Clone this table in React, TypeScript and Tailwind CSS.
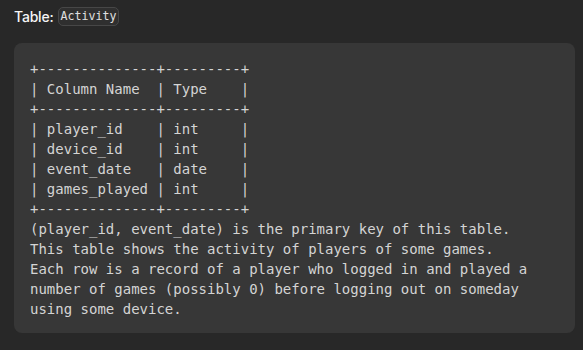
import React from "react";

const table = `+--------------+---------+
| Column Name  | Type    |
+--------------+---------+
| player_id    | int     |
| device_id    | int     |
| event_date   | date    |
| games_played | int     |
+--------------+---------+
(player_id, event_date) is the primary key of this table.
This table shows the activity of players of some games.
Each row is a record of a player who logged in and played a
number of games (possibly 0) before logging out on someday
using some device.`;

export default function App() {
  return (
    <div className="w-[583px] h-[350px] bg-[#282828] px-[14px] pt-[7px] overflow-hidden">
      <div className="flex items-center gap-[4px] h-[19px]">
        <span className="text-[14px] font-medium text-[#f5f5f5] font-['Inter','Liberation_Sans',sans-serif] leading-[19px] tracking-[-0.2px]">
          Table:
        </span>
        <code className="px-[2px] h-[19px] leading-[17px] text-[11.6px] text-[#e0e0e0] bg-[#2f2f2f] border border-[#474747] rounded-[5px] font-['DejaVu_Sans_Mono',monospace]">
          Activity
        </code>
      </div>
      <pre className="mt-[17px] w-[561px] rounded-[8px] bg-[#373737] px-4 pt-[16px] pb-[14px] text-[14px] leading-[20px] text-[#d4d4d4] font-['DejaVu_Sans_Mono',monospace] whitespace-pre">
        {table}
      </pre>
    </div>
  );
}
